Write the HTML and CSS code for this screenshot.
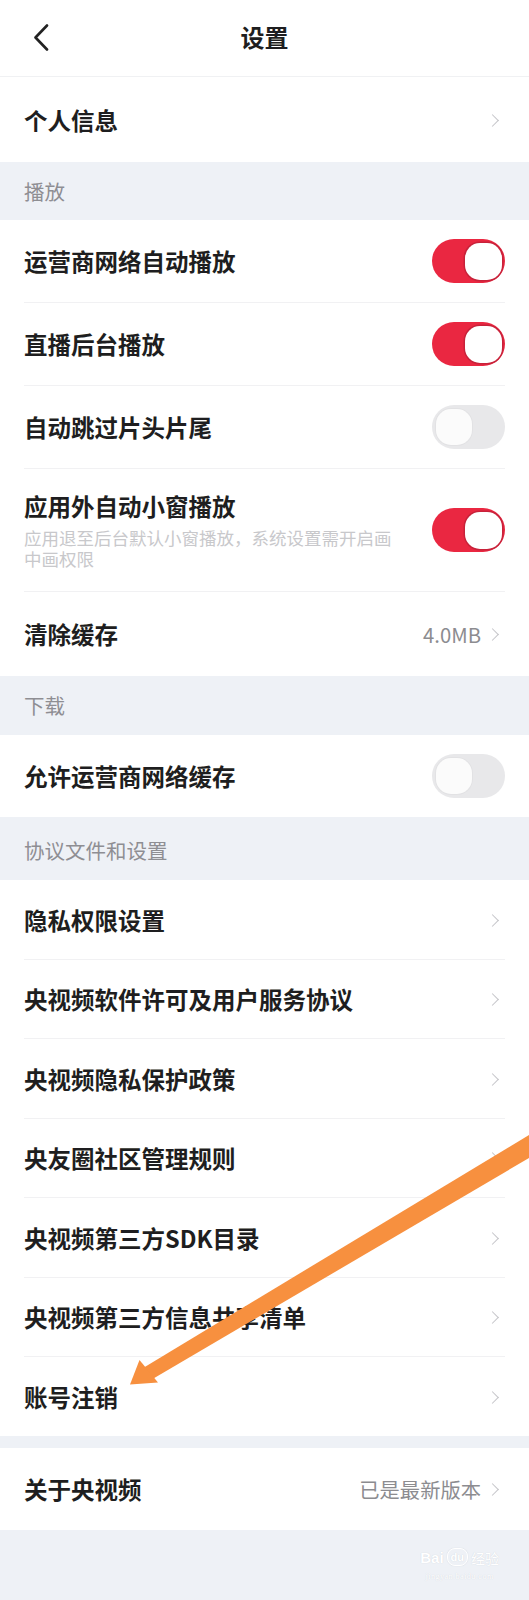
FILE: index.html
```html
<!DOCTYPE html>
<html lang="zh-CN">
<head>
<meta charset="utf-8">
<title>设置</title>
<link rel="stylesheet" href="styles.css">
</head>
<body>
<div class="page">
  <header class="topbar">
    <span class="back">
      <svg width="16" height="27" viewBox="0 0 16 27"><path d="M14 1.5 L2.5 13.5 L14 25.5" fill="none" stroke="#222" stroke-width="2.6" stroke-linecap="round" stroke-linejoin="round"/></svg>
    </span>
    <h1 class="title">设置</h1>
  </header>

  <section class="group">
    <div class="row row85 last">
      <span class="label">个人信息</span>
      <span class="chev"></span>
    </div>
  </section>

  <div class="section s58">播放</div>
  <section class="group">
    <div class="row">
      <span class="label">运营商网络自动播放</span>
      <span class="switch on"><span class="knob"></span></span>
    </div>
    <div class="row">
      <span class="label">直播后台播放</span>
      <span class="switch on"><span class="knob"></span></span>
    </div>
    <div class="row">
      <span class="label">自动跳过片头片尾</span>
      <span class="switch"><span class="knob"></span></span>
    </div>
    <div class="row row-multi">
      <div class="text">
        <span class="label">应用外自动小窗播放</span>
        <span class="sub">应用退至后台默认小窗播放，系统设置需开启画中画权限</span>
      </div>
      <span class="switch on"><span class="knob"></span></span>
    </div>
    <div class="row row84 last">
      <span class="label">清除缓存</span>
      <span class="value">4.0MB</span>
      <span class="chev"></span>
    </div>
  </section>

  <div class="section s59">下载</div>
  <section class="group">
    <div class="row row82 last">
      <span class="label">允许运营商网络缓存</span>
      <span class="switch"><span class="knob"></span></span>
    </div>
  </section>

  <div class="section s63">协议文件和设置</div>
  <section class="group">
    <div class="row row80"><span class="label">隐私权限设置</span><span class="chev"></span></div>
    <div class="row row79"><span class="label">央视频软件许可及用户服务协议</span><span class="chev"></span></div>
    <div class="row row80"><span class="label">央视频隐私保护政策</span><span class="chev"></span></div>
    <div class="row row79"><span class="label">央友圈社区管理规则</span><span class="chev"></span></div>
    <div class="row row80"><span class="label">央视频第三方SDK目录</span><span class="chev"></span></div>
    <div class="row row79"><span class="label">央视频第三方信息共享清单</span><span class="chev"></span></div>
    <div class="row row79 last"><span class="label">账号注销</span><span class="chev"></span></div>
  </section>

  <div class="gap"></div>
  <section class="group">
    <div class="row row82 last">
      <span class="label">关于央视频</span>
      <span class="value">已是最新版本</span>
      <span class="chev"></span>
    </div>
  </section>

  <footer class="bottom">
    <div class="wm">
      <div class="wm-top"><span class="wm-bai">Bai</span><span class="wm-paw">du</span><span class="wm-jy">经验</span></div>
      <div class="wm-url">jingyan.baidu.com</div>
    </div>
  </footer>

  <svg class="annot" width="529" height="1600" viewBox="0 0 529 1600">
    <polygon points="550.1,1145.6 539.9,1128.4 143.1,1367.9 150.9,1380.1" fill="#f7903f"/>
    <polygon points="130,1384.5 139.5,1360 158,1382.5" fill="#f7903f"/>
  </svg>
</div>
</body>
</html>
```

FILE: styles.css
```css
* { box-sizing: border-box; }
html, body { margin: 0; padding: 0; }
body {
  background: #eef1f6;
  font-family: "Noto Sans CJK SC", "Noto Sans", sans-serif;
  color: #1e1e20;
}
.page {
  position: relative;
  width: 529px;
  min-height: 1600px;
  overflow: hidden;
  background: #eef1f6;
}
.topbar {
  height: 77px;
  background: #fff;
  border-bottom: 1px solid #f0f1f3;
  display: flex;
  align-items: center;
  justify-content: center;
  position: relative;
}
.back {
  position: absolute;
  left: 33px;
  top: 24px;
  display: flex;
}
.title {
  margin: 0;
  font-size: 24px;
  font-weight: 700;
  line-height: 1;
  color: #1e1e20;
  padding-bottom: 2px;
}
.group { background: #fff; }
.row {
  margin: 0 24px;
  height: 83px;
  border-bottom: 1px solid #f1f1f3;
  display: flex;
  align-items: center;
}
.row.last { border-bottom: none; }
.row85 { height: 85px; }
.row84 { height: 84px; }
.row82 { height: 82px; }
.row80 { height: 80px; }
.row79 { height: 79px; }
.row-multi { height: 123px; }
.label {
  font-size: 23.5px;
  font-weight: 700;
  line-height: 30px;
  color: #1e1e20;
  flex: 1;
  white-space: nowrap;
}
.text {
  flex: 1;
  display: flex;
  flex-direction: column;
  margin-right: 33px;
}
.text .label { flex: none; }
.sub {
  margin-top: 7px;
  font-size: 17.5px;
  line-height: 20.5px;
  color: #c8c8cb;
}
.value {
  font-size: 20.3px;
  color: #8c8c90;
  line-height: 1;
  margin-right: 10px;
}
.chev {
  width: 8px;
  height: 14px;
  margin-right: 6px;
  position: relative;
}
.chev::before {
  content: "";
  position: absolute;
  left: -3px;
  top: 3px;
  width: 8px;
  height: 8px;
  border-top: 1.5px solid #c4c4c8;
  border-right: 1.5px solid #c4c4c8;
  transform: rotate(45deg);
}
.switch {
  width: 73px;
  height: 44px;
  border-radius: 22px;
  background: #e8e8ea;
  display: flex;
  align-items: center;
  padding: 0 4px;
  flex: none;
}
.switch .knob {
  width: 36px;
  height: 36px;
  border-radius: 15px;
  background: #fbfbfb;
  box-shadow: 0 0 0 1px #e2e2e4;
}
.switch.on {
  background: #ea2741;
  justify-content: flex-end;
  padding: 0 3px;
}
.switch.on .knob {
  width: 37px;
  height: 37px;
  background: #fff;
  box-shadow: 0 0 0 1.5px #c8223a;
}
.section {
  padding: 0 24px;
  display: flex;
  align-items: center;
  font-size: 20.5px;
  color: #8e8e93;
  line-height: 1;
}
.s58 { height: 58px; }
.s59 { height: 59px; }
.s63 { height: 63px; padding-top: 4px; }
.gap { height: 12px; }
.bottom {
  height: 70px;
  display: flex;
  justify-content: flex-end;
  align-items: flex-start;
  padding: 18px 30px 0 0;
}
.wm {
  display: flex;
  flex-direction: column;
  align-items: center;
  color: #fff;
  text-shadow: 0 0 1px #c9ced6;
}
.wm-top {
  display: flex;
  align-items: flex-end;
  font-family: "Liberation Sans", sans-serif;
  font-weight: 700;
}
.wm-bai { font-size: 15px; line-height: 16px; }
.wm-paw {
  font-size: 11px;
  line-height: 12px;
  margin: 0 3px;
  padding: 2px 3px;
  border-radius: 8px;
  border: 1.5px solid #fff;
  box-shadow: 0 0 1px #c9ced6;
}
.wm-jy {
  font-family: "Noto Sans CJK SC", sans-serif;
  font-size: 14px;
  line-height: 16px;
  font-weight: 400;
}
.wm-url {
  font-family: "Liberation Serif", serif;
  font-size: 8px;
  line-height: 10px;
  margin-top: 6px;
  letter-spacing: 0.5px;
}
.annot {
  position: absolute;
  top: 0;
  left: 0;
  pointer-events: none;
}
```
